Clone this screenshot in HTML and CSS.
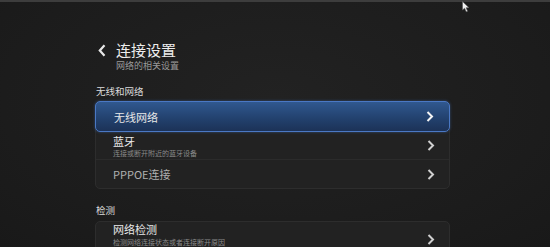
FILE: index.html
```html
<!DOCTYPE html>
<html lang="zh">
<head>
<meta charset="utf-8">
<link rel="stylesheet" href="styles.css">
</head>
<body>
<div class="screen">
  <div class="topline"></div>
  <svg class="cursor" width="8" height="12" viewBox="0 0 8 12"><path d="M0.5 0.5 L0.5 9 L2.6 7.2 L4.2 10.8 L5.6 10.2 L4.1 6.7 L7 6.7 Z" fill="#f2f2f2" stroke="#555" stroke-width="0.6"/></svg>
  <div class="content">
    <div class="header">
      <svg class="back" width="10" height="13" viewBox="0 0 10 13"><path d="M7.5 1.2 L2.8 6.5 L7.5 11.8" fill="none" stroke="#e8e8e8" stroke-width="2.2"/></svg>
      <div class="titles">
        <div class="title">连接设置</div>
        <div class="subtitle">网络的相关设置</div>
      </div>
    </div>
    <div class="section">无线和网络</div>
    <div class="card">
      <div class="item selected">
        <div class="texts"><div class="name">无线网络</div></div>
        <svg class="chev" width="8" height="11" viewBox="0 0 8 11"><path d="M1.5 1 L6 5.5 L1.5 10" fill="none" stroke="#f4f4f4" stroke-width="2"/></svg>
      </div>
      <div class="item two">
        <div class="texts"><div class="name">蓝牙</div><div class="desc">连接或断开附近的蓝牙设备</div></div>
        <svg class="chev" width="8" height="11" viewBox="0 0 8 11"><path d="M1.5 1 L6 5.5 L1.5 10" fill="none" stroke="#cfcfcf" stroke-width="2"/></svg>
      </div>
      <div class="item last">
        <div class="texts"><div class="name dim">PPPOE连接</div></div>
        <svg class="chev" width="8" height="11" viewBox="0 0 8 11"><path d="M1.5 1 L6 5.5 L1.5 10" fill="none" stroke="#cfcfcf" stroke-width="2"/></svg>
      </div>
    </div>
    <div class="section s2">检测</div>
    <div class="card c2">
      <div class="item two">
        <div class="texts"><div class="name">网络检测</div><div class="desc">检测网络连接状态或者连接断开原因</div></div>
        <svg class="chev" width="8" height="11" viewBox="0 0 8 11"><path d="M1.5 1 L6 5.5 L1.5 10" fill="none" stroke="#cfcfcf" stroke-width="2"/></svg>
      </div>
    </div>
  </div>
</div>
</body>
</html>
```
FILE: styles.css
```css
* { box-sizing: border-box; margin: 0; padding: 0; }
html, body { width: 550px; height: 247px; overflow: hidden; background: #1c1c1c; }
body { font-family: "Noto Sans CJK SC", "Noto Sans", sans-serif; color: #e6e6e6; }
.screen { position: relative; width: 550px; height: 247px; overflow: hidden;
  background: radial-gradient(ellipse at 50% 40%, #222 0%, #1c1c1c 70%, #191919 100%); }
.topline { height: 2px; background: #3d3d3d; }
.cursor { position: absolute; left: 462px; top: 1px; }
.content { padding: 39px 0 0 95px; width: 450px; }
.header { display: flex; align-items: flex-start; padding-left: 2px; }
.back { margin-top: 3px; }
.titles { display: flex; flex-direction: column; margin-left: 9px; }
.title { font-size: 15px; line-height: 18px; color: #ededed; }
.subtitle { font-size: 9px; line-height: 12px; color: #9a9a9a; margin-top: 1px; }
.section { font-size: 9.5px; line-height: 14px; color: #dcdcdc; margin-top: 12px; padding-left: 1px; }
.s2 { margin-top: 14px; }
.card { margin-top: 3px; background: #222; border: 1px solid #2d2d2d; border-radius: 5px; }
.c2 { margin-top: 4px; }
.item { display: flex; align-items: center; justify-content: space-between; padding: 0 14px 0 17px;
  border-bottom: 1px solid #2b2b2b; height: 28px; }
.item.last { border-bottom: none; height: 28px; }
.item.two { align-items: flex-start; padding-top: 2px; }
.item.two .chev { align-self: center; margin-top: -2px; }
.c2 .item.two { height: 30px; padding-top: 0; border-bottom: none; }
.c2 .item.two .chev { margin-top: 12px; align-self: flex-start; }
.item.selected { height: 31px; margin: -1px -1px 0 -1px; padding-left: 18px; padding-right: 15px;
  border: 1px solid #4a78c4; border-radius: 5px;
  background: linear-gradient(#30588f, #23426f 55%, #1c3257);
  box-shadow: 0 0 3px rgba(70, 120, 200, 0.5); }
.texts { display: flex; flex-direction: column; }
.name { font-size: 11px; line-height: 14px; color: #e8e8e8; }
.name.dim { color: #b0b0b0; }
.desc { font-size: 7px; line-height: 9px; color: #8a8a8a; margin-top: 1px; }
.c2 .desc { margin-top: 2px; }
.chev { flex: none; }
```
